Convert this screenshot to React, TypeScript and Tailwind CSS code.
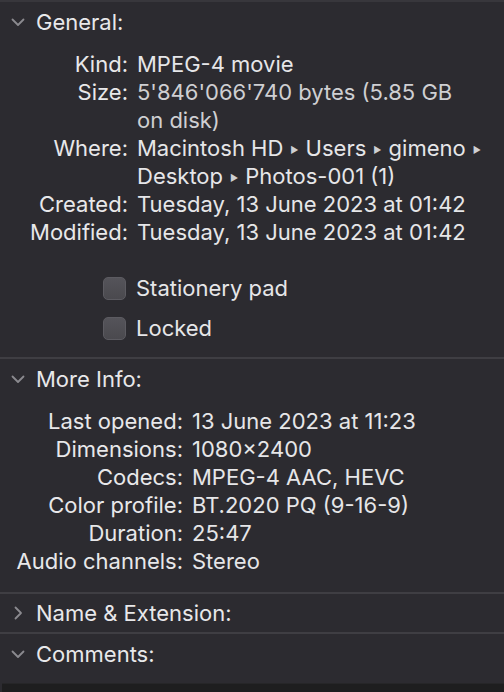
import React from 'react';

const Chevron = ({ open }: { open: boolean }) => (
  <svg width="16" height="16" viewBox="0 0 16 16" className="shrink-0">
    {open ? (
      <path d="M2.5 5.5 L8 11 L13.5 5.5" fill="none" stroke="#8b8a8f" strokeWidth="1.8" strokeLinecap="round" strokeLinejoin="round" />
    ) : (
      <path d="M5.5 2.5 L11 8 L5.5 13.5" fill="none" stroke="#8b8a8f" strokeWidth="1.8" strokeLinecap="round" strokeLinejoin="round" />
    )}
  </svg>
);

const Header = ({ title, open = true, h = 'h-[40px]' }: { title: string; open?: boolean; h?: string }) => (
  <div className={`flex items-center gap-[10px] pl-[10px] ${h}`}>
    <Chevron open={open} />
    <span className="text-[22px] text-[#e8e8ea] leading-none">{title}</span>
  </div>
);

const Row = ({ label, children, labelW, valueCls = 'text-[#e6e6e8]' }: { label: string; children: React.ReactNode; labelW: string; valueCls?: string }) => (
  <div className="flex gap-[9px] leading-[28px] text-[22px] whitespace-nowrap">
    <div className={`${labelW} shrink-0 text-right text-[#e8e8ea]`}>{label}</div>
    <div className={valueCls}>{children}</div>
  </div>
);

// small path separator triangle
const Arrow = () => <span className="text-[9px] leading-none text-[#cfcfd2] mx-[7px] relative top-[-3px]">▶</span>;

const Checkbox = ({ label }: { label: string }) => (
  <div className="flex items-center gap-[10px] h-[40px] pl-[103px]">
    <div className="w-[23px] h-[23px] rounded-[5px] bg-gradient-to-b from-[#55545a] to-[#4a494e] border border-[#5c5b61]" />
    <span className="text-[22px] text-[#e6e6e8]">{label}</span>
  </div>
);

export default function App() {
  return (
    <div
      className="w-[504px] h-[692px] bg-[#2c2b30] overflow-hidden border-t-2 border-[#38373c] flex flex-col"
      style={{ fontFamily: 'Inter, "Liberation Sans", sans-serif' }}
    >
      {/* General */}
      <Header title="General:" />
      <div className="mt-[8px] flex flex-col">
        <Row label="Kind:" labelW="w-[128px]">MPEG-4 movie</Row>
        <Row label="Size:" labelW="w-[128px]" valueCls="text-[#cfcfd2]">
          5'846'066'740 bytes (5.85 GB
          <br />
          on disk)
        </Row>
        <Row label="Where:" labelW="w-[128px]">
          Macintosh HD<Arrow />Users<Arrow />gimeno<Arrow />
          <br />
          Desktop<Arrow />Photos-001 (1)
        </Row>
        <Row label="Created:" labelW="w-[128px]">Tuesday, 13 June 2023 at 01:42</Row>
        <Row label="Modified:" labelW="w-[128px]">Tuesday, 13 June 2023 at 01:42</Row>
      </div>
      <div className="mt-[22px]">
        <Checkbox label="Stationery pad" />
        <Checkbox label="Locked" />
      </div>
      <div className="mt-[9px] h-[2px] bg-[#3f3e43]" />

      {/* More Info */}
      <Header title="More Info:" />
      <div className="mt-[8px] flex flex-col">
        <Row label="Last opened:" labelW="w-[183px]">13 June 2023 at 11:23</Row>
        <Row label="Dimensions:" labelW="w-[183px]">1080×2400</Row>
        <Row label="Codecs:" labelW="w-[183px]">MPEG-4 AAC, HEVC</Row>
        <Row label="Color profile:" labelW="w-[183px]">BT.2020 PQ (9-16-9)</Row>
        <Row label="Duration:" labelW="w-[183px]">25:47</Row>
        <Row label="Audio channels:" labelW="w-[183px]">Stereo</Row>
      </div>
      <div className="mt-[17px] h-[2px] bg-[#3f3e43]" />

      <Header title="Name & Extension:" open={false} h="h-[38px]" />
      <div className="h-[2px] bg-[#3f3e43]" />

      <Header title="Comments:" />
      <div className="mt-[9px] ml-[2px] flex-1 bg-[#1e1e1f] border-t border-[#262628]" />
    </div>
  );
}
